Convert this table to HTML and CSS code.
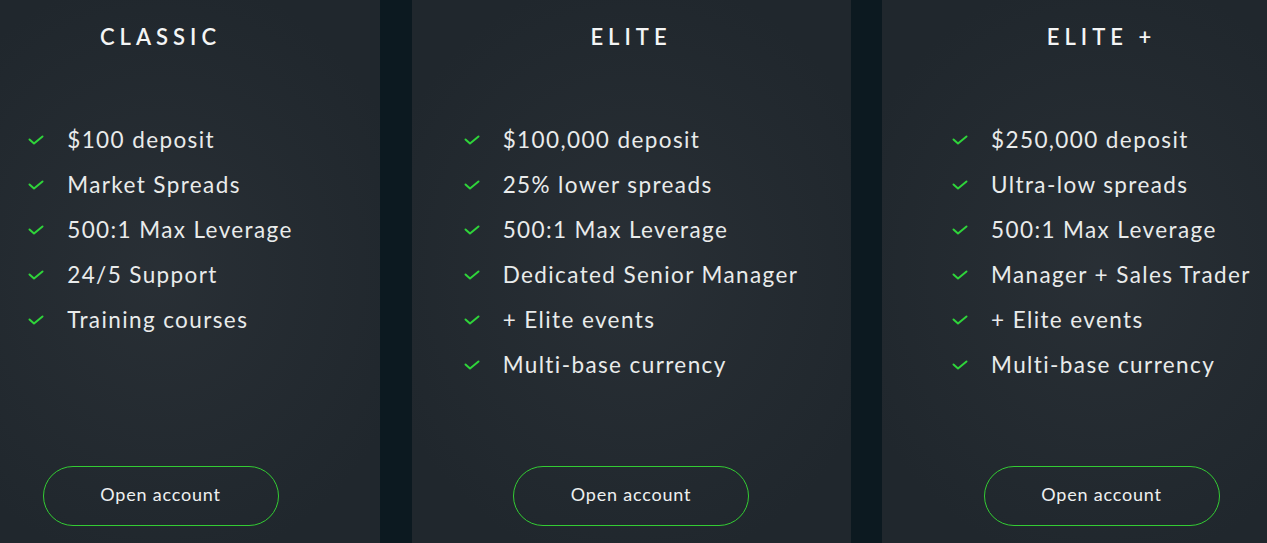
FILE: index.html
```html
<!DOCTYPE html>
<html lang="en">
<head>
<meta charset="utf-8">
<title>Accounts</title>
<link rel="stylesheet" href="styles.css">
</head>
<body>
<div class="plans">
  <section class="plan">
    <h2 class="plan-title">CLASSIC</h2>
    <ul class="features">
      <li><svg class="check" viewBox="0 0 16 10"><path d="M1.5 4.5 L6 8.5 L14.5 1.5"/></svg>$100 deposit</li>
      <li><svg class="check" viewBox="0 0 16 10"><path d="M1.5 4.5 L6 8.5 L14.5 1.5"/></svg>Market Spreads</li>
      <li><svg class="check" viewBox="0 0 16 10"><path d="M1.5 4.5 L6 8.5 L14.5 1.5"/></svg>500:1 Max Leverage</li>
      <li><svg class="check" viewBox="0 0 16 10"><path d="M1.5 4.5 L6 8.5 L14.5 1.5"/></svg>24/5 Support</li>
      <li><svg class="check" viewBox="0 0 16 10"><path d="M1.5 4.5 L6 8.5 L14.5 1.5"/></svg>Training courses</li>
    </ul>
    <a class="btn" href="#">Open account</a>
  </section>
  <section class="plan">
    <h2 class="plan-title">ELITE</h2>
    <ul class="features">
      <li><svg class="check" viewBox="0 0 16 10"><path d="M1.5 4.5 L6 8.5 L14.5 1.5"/></svg>$100,000 deposit</li>
      <li><svg class="check" viewBox="0 0 16 10"><path d="M1.5 4.5 L6 8.5 L14.5 1.5"/></svg>25% lower spreads</li>
      <li><svg class="check" viewBox="0 0 16 10"><path d="M1.5 4.5 L6 8.5 L14.5 1.5"/></svg>500:1 Max Leverage</li>
      <li><svg class="check" viewBox="0 0 16 10"><path d="M1.5 4.5 L6 8.5 L14.5 1.5"/></svg>Dedicated Senior Manager</li>
      <li><svg class="check" viewBox="0 0 16 10"><path d="M1.5 4.5 L6 8.5 L14.5 1.5"/></svg>+ Elite events</li>
      <li><svg class="check" viewBox="0 0 16 10"><path d="M1.5 4.5 L6 8.5 L14.5 1.5"/></svg>Multi-base currency</li>
    </ul>
    <a class="btn" href="#">Open account</a>
  </section>
  <section class="plan">
    <h2 class="plan-title">ELITE +</h2>
    <ul class="features">
      <li><svg class="check" viewBox="0 0 16 10"><path d="M1.5 4.5 L6 8.5 L14.5 1.5"/></svg>$250,000 deposit</li>
      <li><svg class="check" viewBox="0 0 16 10"><path d="M1.5 4.5 L6 8.5 L14.5 1.5"/></svg>Ultra-low spreads</li>
      <li><svg class="check" viewBox="0 0 16 10"><path d="M1.5 4.5 L6 8.5 L14.5 1.5"/></svg>500:1 Max Leverage</li>
      <li><svg class="check" viewBox="0 0 16 10"><path d="M1.5 4.5 L6 8.5 L14.5 1.5"/></svg>Manager + Sales Trader</li>
      <li><svg class="check" viewBox="0 0 16 10"><path d="M1.5 4.5 L6 8.5 L14.5 1.5"/></svg>+ Elite events</li>
      <li><svg class="check" viewBox="0 0 16 10"><path d="M1.5 4.5 L6 8.5 L14.5 1.5"/></svg>Multi-base currency</li>
    </ul>
    <a class="btn" href="#">Open account</a>
  </section>
</div>
</body>
</html>
```

FILE: styles.css
```css
* { box-sizing: border-box; }
html, body {
  margin: 0;
  padding: 0;
  height: 543px;
  overflow: hidden;
  background: #0c1920;
}
body {
  font-family: "Lato", "Noto Sans", sans-serif;
  color: #eceeee;
}
.plans {
  display: flex;
  gap: 31.5px;
  margin-left: -59px;
  height: 543px;
}
.plan {
  flex: 0 0 439px;
  display: flex;
  flex-direction: column;
  align-items: center;
  padding-top: 22px;
  padding-bottom: 17px;
  background:
    radial-gradient(ellipse 60% 55% at 50% 50%, rgba(48,54,60,0.55), rgba(48,54,60,0) 100%),
    #20272d;
}
.plan-title {
  margin: 0;
  font-size: 22px;
  font-weight: 600;
  letter-spacing: 5px;
  line-height: 30px;
  color: #f4f5f5;
}
.features {
  list-style: none;
  margin: 65px 0 0;
  padding: 0;
}
.features li {
  display: flex;
  align-items: center;
  height: 45px;
  font-size: 22.5px;
  font-weight: 400;
  letter-spacing: 1.4px;
  color: #e9ebeb;
}
.check {
  width: 16px;
  height: 10px;
  margin-right: 23px;
  flex: none;
  fill: none;
  stroke: #2fd43a;
  stroke-width: 2;
  stroke-linecap: round;
  stroke-linejoin: round;
}
.btn {
  margin-top: auto;
  width: 236px;
  height: 60px;
  padding-bottom: 4px;
  border: 1.5px solid #33cc33;
  border-radius: 30px;
  display: flex;
  align-items: center;
  justify-content: center;
  font-size: 18px;
  letter-spacing: 0.8px;
  color: #eef0f0;
  text-decoration: none;
}
```
